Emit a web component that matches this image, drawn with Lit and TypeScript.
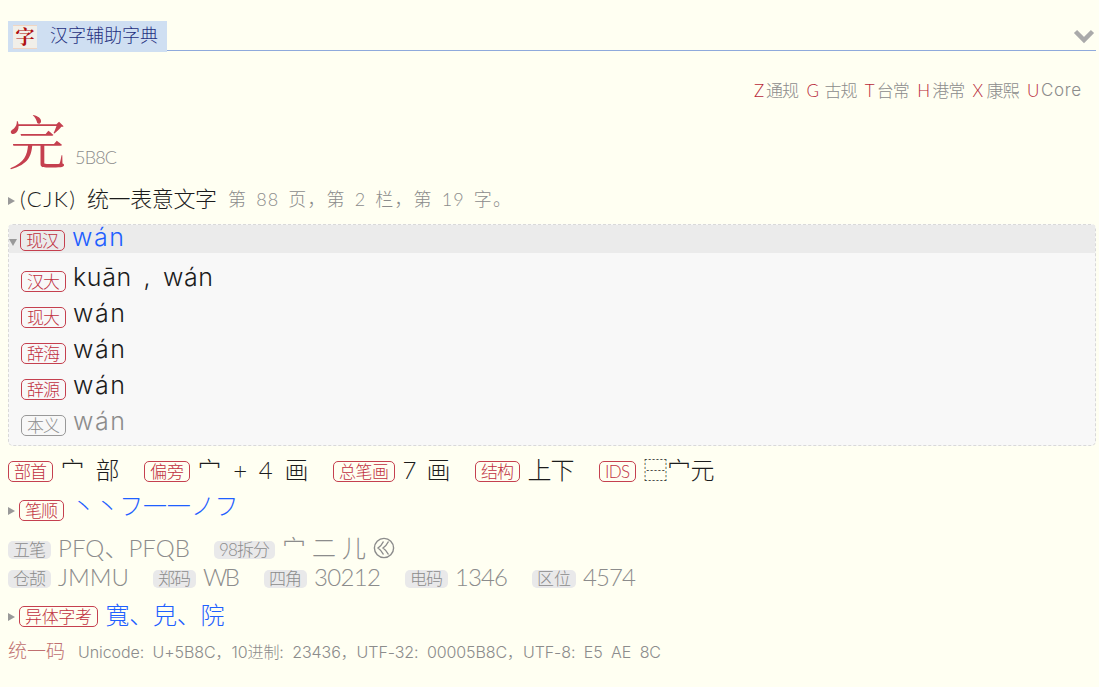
import { LitElement, css, html, nothing } from 'lit';
import { customElement, property } from 'lit/decorators.js';

interface Field {
  label: string;
  labelWidth: number;
  value: string;
  width: number;
  muted?: boolean;
  glyph?: boolean;
}

const tags = [
  ['Z', 9, '通规', 33],
  ['G', 15, '古规', 33],
  ['T', 9, '台常', 33],
  ['H', 12, '港常', 33],
  ['X', 11, '康熙', 33],
  ['U', 11, 'Core', 40],
] as const;

const readings: Field[] = [
  { label: '汉大', labelWidth: 33, value: 'kuān , wán', width: 140 },
  { label: '现大', labelWidth: 33, value: 'wán', width: 52 },
  { label: '辞海', labelWidth: 33, value: 'wán', width: 52 },
  { label: '辞源', labelWidth: 33, value: 'wán', width: 52 },
  { label: '本义', labelWidth: 33, value: 'wán', width: 52, muted: true },
];

const attributes: Field[] = [
  { label: '部首', labelWidth: 33, value: '宀 部', width: 59 },
  { label: '偏旁', labelWidth: 34, value: '宀 + 4 画', width: 111 },
  { label: '总笔画', labelWidth: 50, value: '7 画', width: 48 },
  { label: '结构', labelWidth: 33, value: '上下', width: 47 },
  { label: 'IDS', labelWidth: 25, value: '⿱宀元', width: 71 },
];

const codes: Field[][] = [
  [
    { label: '五笔', labelWidth: 33, value: 'PFQ、PFQB', width: 132 },
    { label: '98拆分', labelWidth: 51, value: '宀二儿', width: 84, glyph: true },
  ],
  [
    { label: '仓颉', labelWidth: 33, value: 'JMMU', width: 71 },
    { label: '郑码', labelWidth: 33, value: 'WB', width: 37 },
    { label: '四角', labelWidth: 33, value: '30212', width: 67 },
    { label: '电码', labelWidth: 33, value: '1346', width: 53 },
    { label: '区位', labelWidth: 34, value: '4574', width: 53 },
  ],
];

// Text spread by letter spacing so that it fills a given width
@customElement('fit-text')
export class FitText extends LitElement {
  @property() text = '';
  @property({ type: Number }) width = 0;

  updated() {
    const span = this.renderRoot.querySelector('span')!;
    const gaps = [...this.text].length - 1;
    if (gaps < 1) return;
    span.style.letterSpacing = '0px';
    const natural = span.getBoundingClientRect().width;
    span.style.letterSpacing = `${(this.width - natural) / gaps}px`;
  }

  render() {
    return html`<div class="box" style="width: ${this.width}px"><span>${this.text}</span></div>`;
  }

  static styles = css`
    :host {
      display: block;
      flex: none;
    }

    .box {
      white-space: pre;
    }
  `;
}

@customElement('app-root')
export class AppRoot extends LitElement {
  private fit(text: string, width: number, name = '') {
    return html`<fit-text class="${name}" .text=${text} .width=${width}></fit-text>`;
  }

  private renderField(field: Field, kind = '') {
    return html`
      <div class="field ${kind} ${field.muted ? 'muted' : ''}">
        <span class="badge">${this.fit(field.label, field.labelWidth)}</span>
        ${this.fit(field.value, field.width, 'value')}
        ${field.glyph
          ? html`<svg class="component" viewBox="0 0 22 22">
              <circle cx="11" cy="11" r="9.6" />
              <path d="M10.5 4.5 Q8.5 8.5 5 11 Q8.5 13.5 10.5 17.5M15.5 4.5 Q13.5 8.5 10 11 Q13.5 13.5 15.5 17.5" />
            </svg>`
          : nothing}
      </div>
    `;
  }

  render() {
    return html`
      <header class="header">
        <div class="tab">
          <span class="logo">字</span>
          ${this.fit('汉字辅助字典', 108, 'title')}
        </div>
        <svg class="chevron" viewBox="0 0 22 16"><path d="M2.5 2.5 L11 11 L19.5 2.5" /></svg>
      </header>

      <div class="tags">
        ${tags.map(
          ([key, keyWidth, name, width]) => html`
            <div class="tag">${this.fit(key, keyWidth, 'key')}${this.fit(name, width, 'set')}</div>
          `,
        )}
      </div>

      <div class="hero">
        <span class="char">完</span>
        ${this.fit('5B8C', 42, 'code')}
      </div>

      <div class="row block">
        <i class="arrow"></i>
        ${this.fit('(CJK)', 55, 'latin')}
        ${this.fit('统一表意文字', 130, 'name')}
        ${this.fit('第 88 页，第 2 栏，第 19 字。', 283, 'page')}
      </div>

      <section class="readings">
        <div class="summary">
          <i class="arrow open"></i>
          ${this.renderField({ label: '现汉', labelWidth: 33, value: 'wán', width: 52 }, 'link')}
        </div>
        <div class="list">${readings.map((field) => this.renderField(field))}</div>
      </section>

      <div class="row attributes">${attributes.map((field) => this.renderField(field))}</div>

      <div class="row strokes">
        <i class="arrow"></i>
        ${this.renderField({ label: '笔顺', labelWidth: 33, value: '丶丶フ一一ノフ', width: 167 }, 'link')}
      </div>

      <div class="codes">
        ${codes.map((line) => html`<div class="row">${line.map((field) => this.renderField(field, 'plain'))}</div>`)}
      </div>

      <div class="row variants">
        <i class="arrow"></i>
        ${this.renderField({ label: '异体字考', labelWidth: 67, value: '寬、皃、院', width: 119 }, 'link')}
      </div>

      <div class="unicode">
        ${this.fit('统一码', 57, 'heading')}
        ${this.fit('Unicode: U+5B8C，10进制: 23436，UTF-32: 00005B8C，UTF-8: E5 AE 8C', 583, 'values')}
      </div>
    `;
  }

  static styles = css`
    :host {
      display: flex;
      flex-direction: column;
      box-sizing: border-box;
      width: 1099px;
      height: 687px;
      padding: 21px 3px 0 8px;
      overflow: hidden;
      background-color: #fffff2;
      color: #1c1c1c;
      font-family: Lato, 'Noto Sans CJK SC', sans-serif;
      font-size: 24px;
      font-weight: 300;
      line-height: 1;
    }

    .header {
      display: flex;
      justify-content: space-between;
      box-sizing: border-box;
      height: 30px;
      border-bottom: 1px solid #8faadc;
    }

    .tab {
      display: flex;
      align-items: center;
      gap: 13px;
      box-sizing: border-box;
      width: 159px;
      height: 31px;
      padding-left: 5px;
      background-color: #cfdff2;
      color: #1f2f80;
      font-size: 18px;
    }

    .title {
      margin-bottom: 3px;
    }

    .logo {
      width: 24px;
      height: 24px;
      background-color: #f1efe9;
      box-shadow: inset 0 1px #efd5c3, inset 0 -1px #efd5c3;
      color: #b01010;
      font-family: 'Noto Serif CJK SC', 'Noto Sans CJK SC', serif;
      font-size: 19px;
      font-weight: 700;
      line-height: 22px;
      text-align: center;
    }

    .chevron {
      width: 22px;
      height: 16px;
      margin: 8px 1px 0 0;
      fill: none;
      stroke: #aaa;
      stroke-width: 4.5;
    }

    .tags {
      display: flex;
      justify-content: flex-end;
      align-items: center;
      gap: 7.4px;
      height: 24px;
      margin-top: 27px;
      padding-right: 15px;
      color: #8c8c8c;
      font-size: 17px;
    }

    .tag {
      display: flex;
      gap: 3px;
    }

    .tag:last-child .set {
      font-family: Inter, sans-serif;
    }

    .key {
      color: #b82838;
    }

    .hero {
      display: flex;
      align-items: baseline;
      gap: 9px;
      height: 80px;
      color: #8c8c8c;
      font-size: 18px;
    }

    .char {
      width: 58px;
      color: #c5404f;
      font-family: 'Noto Serif CJK SC', 'Noto Sans CJK SC', serif;
      font-size: 58px;
      font-weight: 400;
      line-height: 74px;
    }

    .row {
      display: flex;
      align-items: center;
    }

    .arrow {
      flex: none;
      box-sizing: border-box;
      width: 7px;
      height: 8px;
      margin: 4px 4px 0 0;
      border: solid transparent;
      border-width: 4px 0 4px 7px;
      border-left-color: #999;
    }

    .arrow.open {
      width: 8px;
      height: 7px;
      margin: 6px 3px 0 0;
      border-width: 7px 4px 0;
      border-color: #999 transparent transparent;
    }

    .block {
      height: 34px;
      font-size: 22px;
    }

    .block .latin {
      margin-left: 1px;
    }

    .block .name {
      margin-left: 12px;
    }

    .page {
      margin-left: 11px;
      color: #8c8c8c;
      font-size: 18px;
      word-spacing: 3px;
    }

    .readings {
      box-sizing: border-box;
      height: 222px;
      margin-top: 8px;
      border: 1px dashed #d9d9d9;
      border-radius: 5px;
      background-color: #f8f8f8;
    }

    .readings .field {
      gap: 7px;
    }

    .readings .value {
      font-family: Inter, Lato, sans-serif;
      font-size: 25px;
      word-spacing: 4px;
    }

    .summary {
      display: flex;
      height: 28px;
      align-items: center;
      background-color: #ebebeb;
    }

    .list {
      padding: 8px 0 0 12px;
    }

    .field {
      display: flex;
      align-items: center;
      gap: 7.5px;
    }

    .list .field {
      height: 36px;
    }

    .badge {
      display: flex;
      align-items: center;
      box-sizing: border-box;
      height: 21px;
      margin-top: 3px;
      padding: 0 5px 1px;
      border: 1px solid #c5404f;
      border-radius: 5px;
      color: #c0303f;
      font-size: 17px;
    }

    .list .badge {
      margin-top: 5px;
    }

    .value {
      margin-bottom: 3px;
    }

    .link .value {
      color: #1f60ff;
    }

    .muted .badge {
      border-color: #999;
    }

    .muted .badge,
    .muted .value,
    .plain .value {
      color: #8c8c8c;
    }

    .attributes {
      gap: 24.5px;
      height: 36px;
      margin-top: 6px;
    }

    .attributes .value {
      margin-bottom: 1px;
    }

    .strokes {
      height: 32px;
      margin-top: 5px;
    }

    .strokes .value {
      margin-bottom: 6px;
    }

    .codes {
      margin-top: 8px;
    }

    .codes .row {
      gap: 24px;
      height: 29px;
    }

    .plain {
      gap: 7px;
    }

    .plain .badge {
      height: 18px;
      margin-top: 5px;
      padding: 0 4px 1px;
      border-color: transparent;
      background-color: #e9e9ea;
      color: #8c8c8c;
    }

    .plain .value {
      margin-bottom: 0;
    }

    .component {
      width: 22px;
      height: 22px;
      fill: none;
      stroke: #8c8c8c;
      stroke-width: 1.4;
    }

    .variants {
      height: 32px;
      margin-top: 8px;
    }

    .variants .value {
      margin-bottom: 0;
    }

    .unicode {
      display: flex;
      align-items: baseline;
      gap: 13px;
      margin-top: 10px;
      color: #8c8c8c;
      font-size: 17px;
    }

    .values {
      font-family: Inter, 'Noto Sans CJK SC', sans-serif;
      font-size: 16px;
      word-spacing: 4px;
    }

    .heading {
      color: #c07070;
      font-size: 19px;
    }
  `;
}

declare global {
  interface HTMLElementTagNameMap {
    'app-root': AppRoot;
    'fit-text': FitText;
  }
}
